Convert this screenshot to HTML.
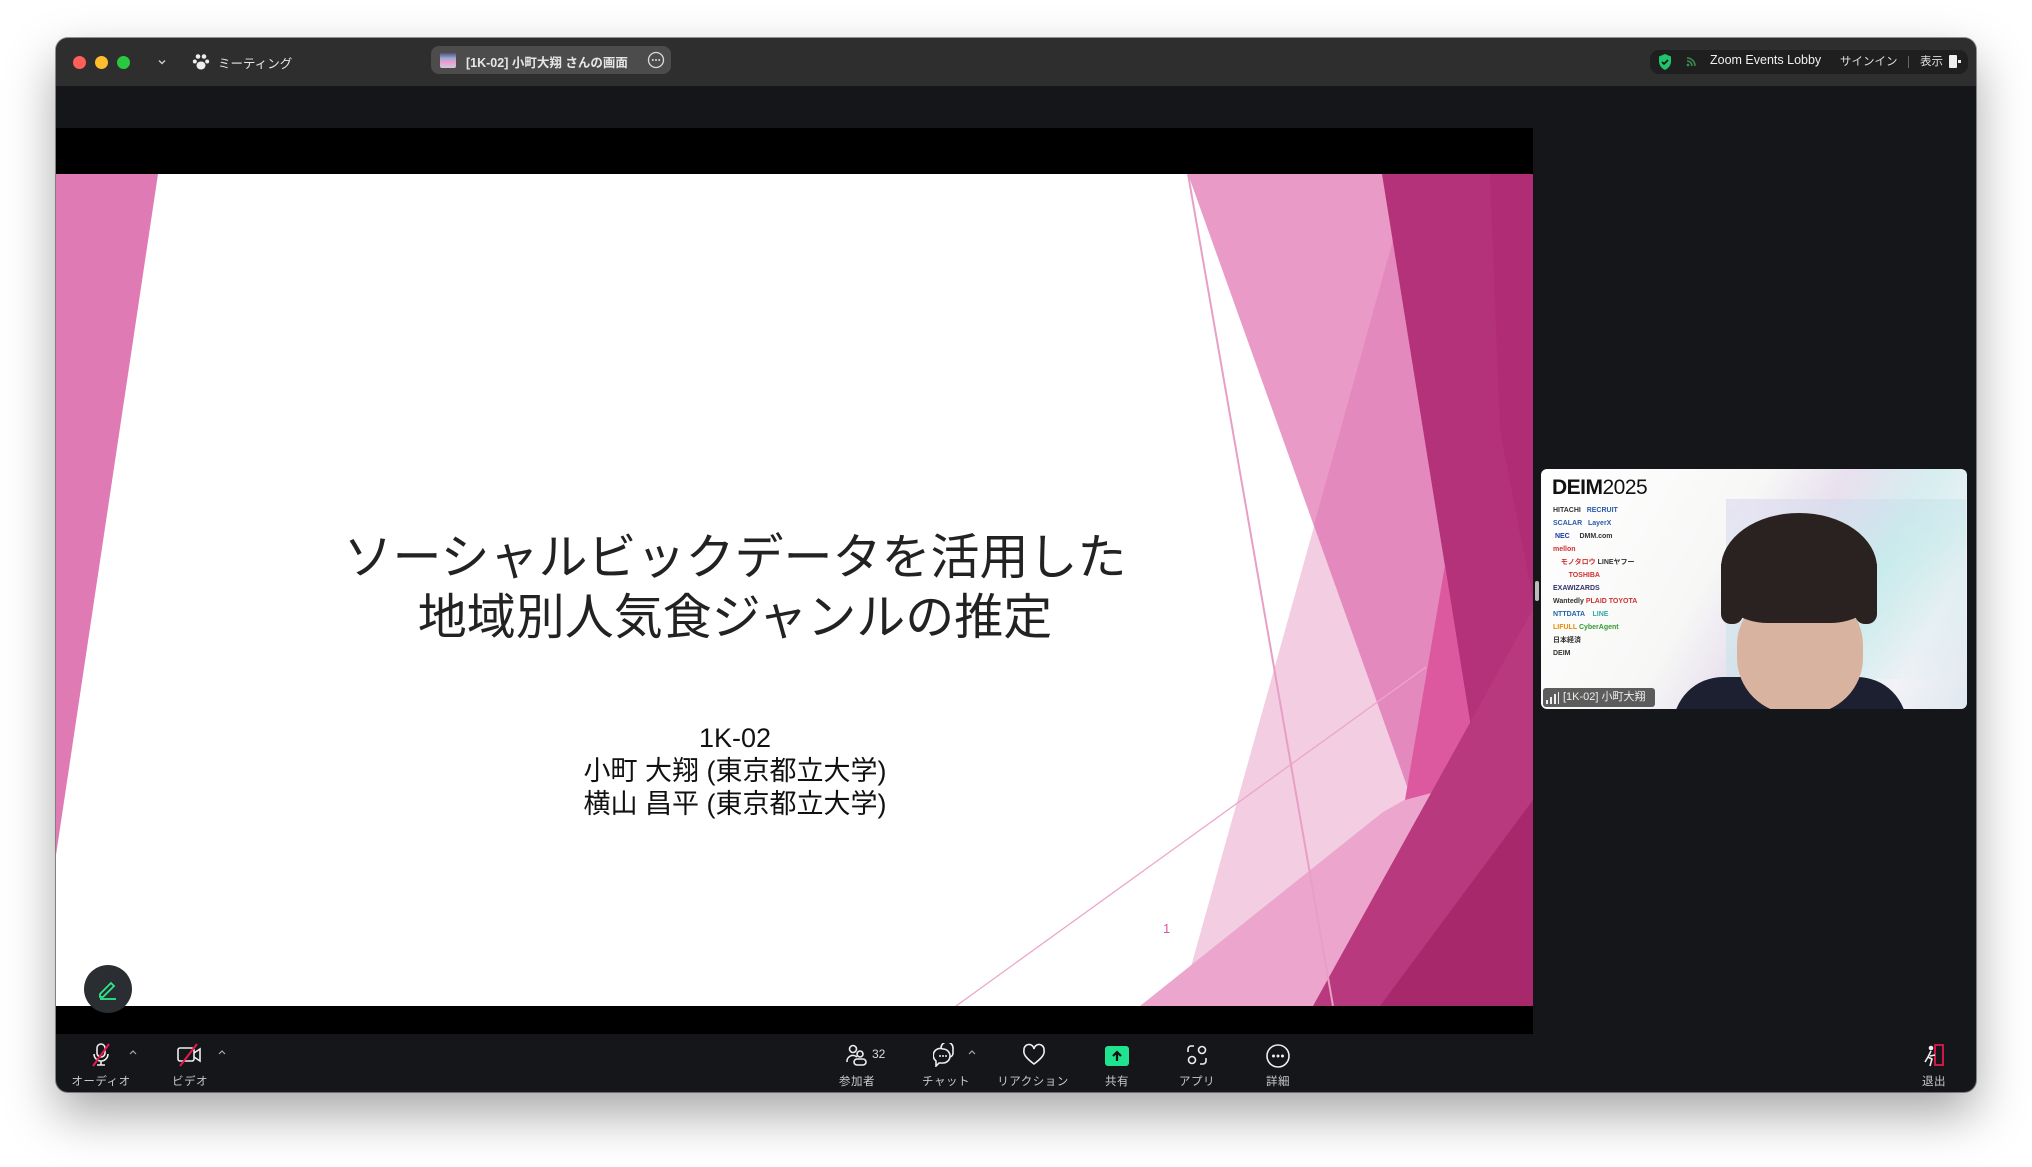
<!DOCTYPE html>
<html><head><meta charset="utf-8">
<style>
*{margin:0;padding:0;box-sizing:border-box}
body{width:2032px;height:1167px;background:#fff;position:relative;overflow:hidden;font-family:"Liberation Sans","Noto Sans CJK JP",sans-serif}
.win{position:absolute;left:56px;top:38px;width:1920px;height:1054px;border-radius:12px;background:#141619;overflow:hidden;box-shadow:0 22px 50px rgba(0,0,0,.35),0 0 0 1px rgba(0,0,0,.4)}
.tb{position:absolute;left:0;top:0;width:1920px;height:48px;background:#2e2e2e}
.a{position:absolute}
.dot{position:absolute;width:13px;height:13px;border-radius:50%;top:18px}
.t{position:absolute;color:#e6e6e6;font-size:12px;white-space:nowrap}
.lbl{position:absolute;top:1035px;color:#c8c8c8;font-size:11.5px;transform:translateX(-50%);white-space:nowrap;letter-spacing:.5px}
.ic{position:absolute;top:1005px}
</style></head><body>
<div class="win">
 <div class="tb"></div>
 <div class="dot" style="left:17px;background:#fe5f57"></div>
 <div class="dot" style="left:39px;background:#febc2e"></div>
 <div class="dot" style="left:61px;background:#28c840"></div>
 <svg class="a" style="left:100px;top:18px" width="12" height="12" viewBox="0 0 12 12"><path d="M3 4.5l3 3 3-3" stroke="#ccc" stroke-width="1.4" fill="none"/></svg>
 <svg class="a" style="left:136px;top:15px" width="18" height="18" viewBox="0 0 18 18" fill="#eee"><circle cx="6" cy="3.5" r="2.3"/><circle cx="12" cy="3.5" r="2.3"/><circle cx="2.8" cy="8.5" r="2"/><circle cx="15.2" cy="8.5" r="2"/><ellipse cx="9" cy="12.5" rx="4.5" ry="4"/></svg>
 <div class="t" style="left:162px;top:15px;font-size:12.5px">ミーティング</div>
 <div class="a" style="left:375px;top:8px;width:240px;height:28px;border-radius:8px;background:#4c4c4c"></div>
 <div class="a" style="left:384px;top:14px;width:16px;height:16px;border-radius:2px;background:linear-gradient(#445 0,#9ad 40%,#e9c 60%,#ccd 100%)"></div>
 <div class="t" style="left:410px;top:14px;font-size:12.5px;font-weight:bold">[1K-02] 小町大翔 さんの画面</div>
 <svg class="a" style="left:591px;top:13px" width="18" height="18" viewBox="0 0 18 18"><circle cx="9" cy="9" r="7.5" stroke="#ddd" stroke-width="1.3" fill="none"/><circle cx="5.8" cy="9" r="1" fill="#ddd"/><circle cx="9" cy="9" r="1" fill="#ddd"/><circle cx="12.2" cy="9" r="1" fill="#ddd"/></svg>
 <div class="a" style="left:1594px;top:12px;width:318px;height:24px;border-radius:9px;background:#1f1f1f"></div>
 <svg class="a" style="left:1601px;top:15px" width="16" height="18" viewBox="0 0 16 18"><path d="M8 1L2 3.5v5C2 12.5 5 15.5 8 17c3-1.5 6-4.5 6-8.5v-5z" fill="#21c46a"/><path d="M5 9l2 2 4-4" stroke="#111" stroke-width="1.6" fill="none"/></svg>
 <svg class="a" style="left:1629px;top:16px" width="14" height="14" viewBox="0 0 14 14"><path d="M2 4a8 8 0 0 1 8 8M2 7a5 5 0 0 1 5 5" stroke="#3d8a4f" stroke-width="1.6" fill="none"/><circle cx="3" cy="11" r="1.4" fill="#3d8a4f"/></svg>
 <div class="t" style="left:1654px;top:15px;font-size:12.5px;color:#f0f0f0">Zoom Events Lobby</div>
 <div class="t" style="left:1784px;top:15px;font-size:11.5px;color:#ddd">サインイン</div>
 <div class="a" style="left:1852px;top:18px;width:1px;height:12px;background:#666"></div>
 <div class="t" style="left:1864px;top:15px;font-size:11.5px;color:#ddd">表示</div>
 <div class="a" style="left:1893px;top:17px;width:8px;height:13px;background:#eee;border-radius:1px"></div>
 <div class="a" style="left:1902px;top:22px;width:3px;height:3px;background:#eee"></div>

 <div class="a" style="left:0;top:90px;width:1477px;height:906px;background:#000"></div>
 <svg class="a" style="left:0;top:136px" width="1477" height="832" viewBox="56 174 1477 832">
  <rect x="56" y="174" width="1477" height="832" fill="#fff"/>
  <polygon points="56,174 158,174 56,855" fill="#e07ab5"/>
  <polygon points="1393,244 1460,1006 1180,1006" fill="#f3cde2"/>
  <polygon points="1188,174 1395,174 1470,722 1407,786" fill="#e99ac6"/>
  <polygon points="1393,240 1450,560 1440,780 1407,786 1314,525" fill="#e489bd"/>
  <polygon points="1140,1006 1383,812 1440,780 1410,1006" fill="#eca6cd"/>
  <polygon points="1382,174 1533,174 1533,1006 1500,1006 1470,722" fill="#b3327a"/>
  <polygon points="1533,174 1533,600 1500,430 1490,174" fill="#b02c75"/>
  <polygon points="1445,565 1470,722 1480,780 1405,800" fill="#dc589f"/>
  <polygon points="1313,1006 1533,609 1533,1006" fill="#b9397f"/>
  <polygon points="1380,1006 1533,800 1533,1006" fill="#a8286c"/>
  <line x1="1188" y1="174" x2="1333" y2="1006" stroke="#e79fc6" stroke-width="2"/>
  <line x1="956" y1="1006" x2="1426" y2="667" stroke="#eba6cb" stroke-width="1.3"/>
  <text x="1163" y="933" fill="#e0559f" font-size="13" font-family="Liberation Sans">1</text>
 </svg>
 <div class="a" style="left:0;top:490px;width:1358px;text-align:center;color:#222;font-size:49px;line-height:60px;font-family:'Liberation Sans','Noto Sans CJK JP',sans-serif">ソーシャルビックデータを活用した<br>地域別人気食ジャンルの推定</div>
 <div class="a" style="left:0;top:684px;width:1358px;text-align:center;color:#111;font-size:27px;line-height:33px">1K-02<br>小町 大翔 (東京都立大学)<br>横山 昌平 (東京都立大学)</div>
 <div class="a" style="left:28px;top:927px;width:48px;height:48px;border-radius:50%;background:#2a2d31"></div>
 <svg class="a" style="left:40px;top:939px" width="24" height="24" viewBox="0 0 24 24"><path d="M4 17l11-11 3 3-11 11H4z" stroke="#2ee88a" stroke-width="1.8" fill="none"/><path d="M4 22h16" stroke="#2ee88a" stroke-width="1.8"/></svg>

 <div class="a" style="left:1485px;top:431px;width:426px;height:240px;border-radius:6px;overflow:hidden;background:linear-gradient(120deg,#fff 0%,#f7f8f6 40%,#e8e0ee 55%,#d6eef0 70%,#f2f2f6 85%,#dfe8f0 100%)">
  <div class="a" style="left:11px;top:7px;font-size:21px;font-weight:bold;color:#111;letter-spacing:-.5px">DEIM<span style="font-weight:normal">2025</span></div>
  <div class="a" style="left:12px;top:35px;font-size:7px;line-height:13px;color:#333;font-weight:bold;width:130px">HITACHI &nbsp; <span style="color:#2a5aa8">RECRUIT</span><br><span style="color:#2a5aa8">SCALAR &nbsp; LayerX</span><br><span style="color:#1a3aa0">&nbsp;NEC</span> &nbsp;&nbsp;&nbsp; DMM.com<br><span style="color:#c33">mellon</span><br>&nbsp;&nbsp;&nbsp;&nbsp;<span style="color:#c33">モノタロウ</span> LINEヤフー<br>&nbsp;&nbsp;&nbsp;&nbsp;&nbsp;&nbsp;&nbsp;&nbsp;<span style="color:#c33">TOSHIBA</span><br><span style="color:#336">EXAWIZARDS</span><br>Wantedly <span style="color:#c33">PLAID TOYOTA</span><br><span style="color:#26a">NTTDATA</span> &nbsp;&nbsp; <span style="color:#3aa">LINE</span><br><span style="color:#e80">LIFULL</span> <span style="color:#393">CyberAgent</span><br>日本経済<br>DEIM</div>
  <div class="a" style="left:185px;top:30px;width:240px;height:180px;background:linear-gradient(150deg,rgba(220,210,240,.7),rgba(180,230,230,.5),rgba(255,255,255,0));opacity:.8"></div>
  <div class="a" style="left:132px;top:208px;width:234px;height:50px;border-radius:60px 60px 0 0;background:#1c2030"></div>
  <div class="a" style="left:196px;top:120px;width:126px;height:125px;border-radius:45% 45% 45% 45%;background:#d8b4a0"></div>
  <div class="a" style="left:180px;top:44px;width:156px;height:110px;border-radius:50% 50% 30% 30%;background:#2a2220"></div>
  <div class="a" style="left:180px;top:95px;width:22px;height:60px;background:#2a2220;border-radius:0 0 10px 10px"></div>
  <div class="a" style="left:314px;top:95px;width:22px;height:60px;background:#2a2220;border-radius:0 0 10px 10px"></div>
  <div class="a" style="left:2px;top:219px;width:112px;height:19px;border-radius:3px;background:rgba(40,40,40,.75);color:#eee;font-size:11px;line-height:19px;padding-left:20px">[1K-02] 小町大翔</div>
  <svg class="a" style="left:5px;top:223px" width="13" height="12" viewBox="0 0 13 12" fill="#eee"><rect x="0" y="8" width="2" height="4"/><rect x="4" y="5" width="2" height="7"/><rect x="8" y="2" width="2" height="10"/><rect x="12" y="0" width="1" height="12"/></svg>
 </div>
 <div class="a" style="left:1479px;top:543px;width:4px;height:20px;border-radius:2px;background:#bbb"></div>

 <svg class="ic" style="left:34px" width="22" height="24" viewBox="0 0 22 24"><rect x="7" y="1" width="8" height="13" rx="4" stroke="#eee" stroke-width="1.6" fill="none"/><path d="M4 11a7 7 0 0 0 14 0M11 18v4M7 22h8" stroke="#eee" stroke-width="1.6" fill="none"/><path d="M19 1L3 23" stroke="#e8174f" stroke-width="2"/></svg>
 <svg class="a" style="left:72px;top:1010px" width="10" height="8" viewBox="0 0 10 8"><path d="M2 6l3-3 3 3" stroke="#aaa" stroke-width="1.2" fill="none"/></svg>
 <svg class="ic" style="left:121px" width="26" height="24" viewBox="0 0 26 24"><rect x="1" y="5" width="16" height="13" rx="2" stroke="#eee" stroke-width="1.6" fill="none"/><path d="M17 10l6-4v12l-6-4" stroke="#eee" stroke-width="1.6" fill="none"/><path d="M20 1L3 23" stroke="#e8174f" stroke-width="2"/></svg>
 <svg class="a" style="left:161px;top:1010px" width="10" height="8" viewBox="0 0 10 8"><path d="M2 6l3-3 3 3" stroke="#aaa" stroke-width="1.2" fill="none"/></svg>
 <div class="lbl" style="left:45px">オーディオ</div>
 <div class="lbl" style="left:134px">ビデオ</div>

 <svg class="ic" style="left:789px" width="24" height="24" viewBox="0 0 24 24" stroke="#eee" stroke-width="1.6" fill="none"><circle cx="8" cy="6" r="3.5"/><path d="M2 19a6 6 0 0 1 10-5"/><circle cx="15" cy="11" r="3"/><rect x="9" y="16" width="12" height="6" rx="3"/></svg>
 <div class="t" style="left:816px;top:1009px;font-size:12px;color:#ddd">32</div>
 <div class="lbl" style="left:801px">参加者</div>
 <svg class="ic" style="left:877px" width="24" height="24" viewBox="0 0 24 24" stroke="#eee" stroke-width="1.6" fill="none"><path d="M8 5a6 6 0 0 1 12 0v5a4 4 0 0 1-3 4"/><path d="M10 6a7 7 0 1 1 0 14H6l-3 3v-5a7 7 0 0 1 7-12z"/><g fill="#eee" stroke="none"><circle cx="7" cy="13" r="1"/><circle cx="10" cy="13" r="1"/><circle cx="13" cy="13" r="1"/></g></svg>
 <svg class="a" style="left:911px;top:1010px" width="10" height="8" viewBox="0 0 10 8"><path d="M2 6l3-3 3 3" stroke="#aaa" stroke-width="1.2" fill="none"/></svg>
 <div class="lbl" style="left:890px">チャット</div>
 <svg class="ic" style="left:965px" width="26" height="24" viewBox="0 0 26 24"><path d="M13 21C5 15 2 11 3 7a5 5 0 0 1 10-1 5 5 0 0 1 10 1c1 4-2 8-10 14z" stroke="#eee" stroke-width="1.6" fill="none"/></svg>
 <div class="lbl" style="left:977px">リアクション</div>
 <div class="a" style="left:1049px;top:1008px;width:24px;height:20px;border-radius:3px;background:#1fe38e"></div>
 <svg class="a" style="left:1053px;top:1010px" width="16" height="16" viewBox="0 0 16 16"><path d="M8 13V4M4 8l4-4 4 4" stroke="#111" stroke-width="2.2" fill="none"/></svg>
 <div class="lbl" style="left:1061px">共有</div>
 <svg class="ic" style="left:1129px" width="24" height="24" viewBox="0 0 24 24" stroke="#eee" stroke-width="1.6" fill="none"><path d="M3 9V6a3 3 0 0 1 3-3h3M21 15v3a3 3 0 0 1-3 3h-3"/><circle cx="17" cy="7" r="3.5"/><circle cx="7" cy="17" r="3.5"/></svg>
 <div class="lbl" style="left:1141px">アプリ</div>
 <svg class="ic" style="left:1209px" width="26" height="26" viewBox="0 0 26 26"><circle cx="13" cy="13" r="11" stroke="#eee" stroke-width="1.6" fill="none"/><g fill="#eee"><circle cx="8.5" cy="13" r="1.5"/><circle cx="13" cy="13" r="1.5"/><circle cx="17.5" cy="13" r="1.5"/></g></svg>
 <div class="lbl" style="left:1222px">詳細</div>
 <svg class="ic" style="left:1866px" width="24" height="26" viewBox="0 0 24 26"><rect x="13" y="2" width="8" height="20" stroke="#e8174f" stroke-width="1.8" fill="none"/><circle cx="9" cy="5" r="2.3" fill="#eee"/><path d="M9 8l-3 6 4 2-2 7M8 13l5-1M6 14l-3 5" stroke="#eee" stroke-width="1.6" fill="none"/></svg>
 <div class="lbl" style="left:1878px">退出</div>
</div>
</body></html>
